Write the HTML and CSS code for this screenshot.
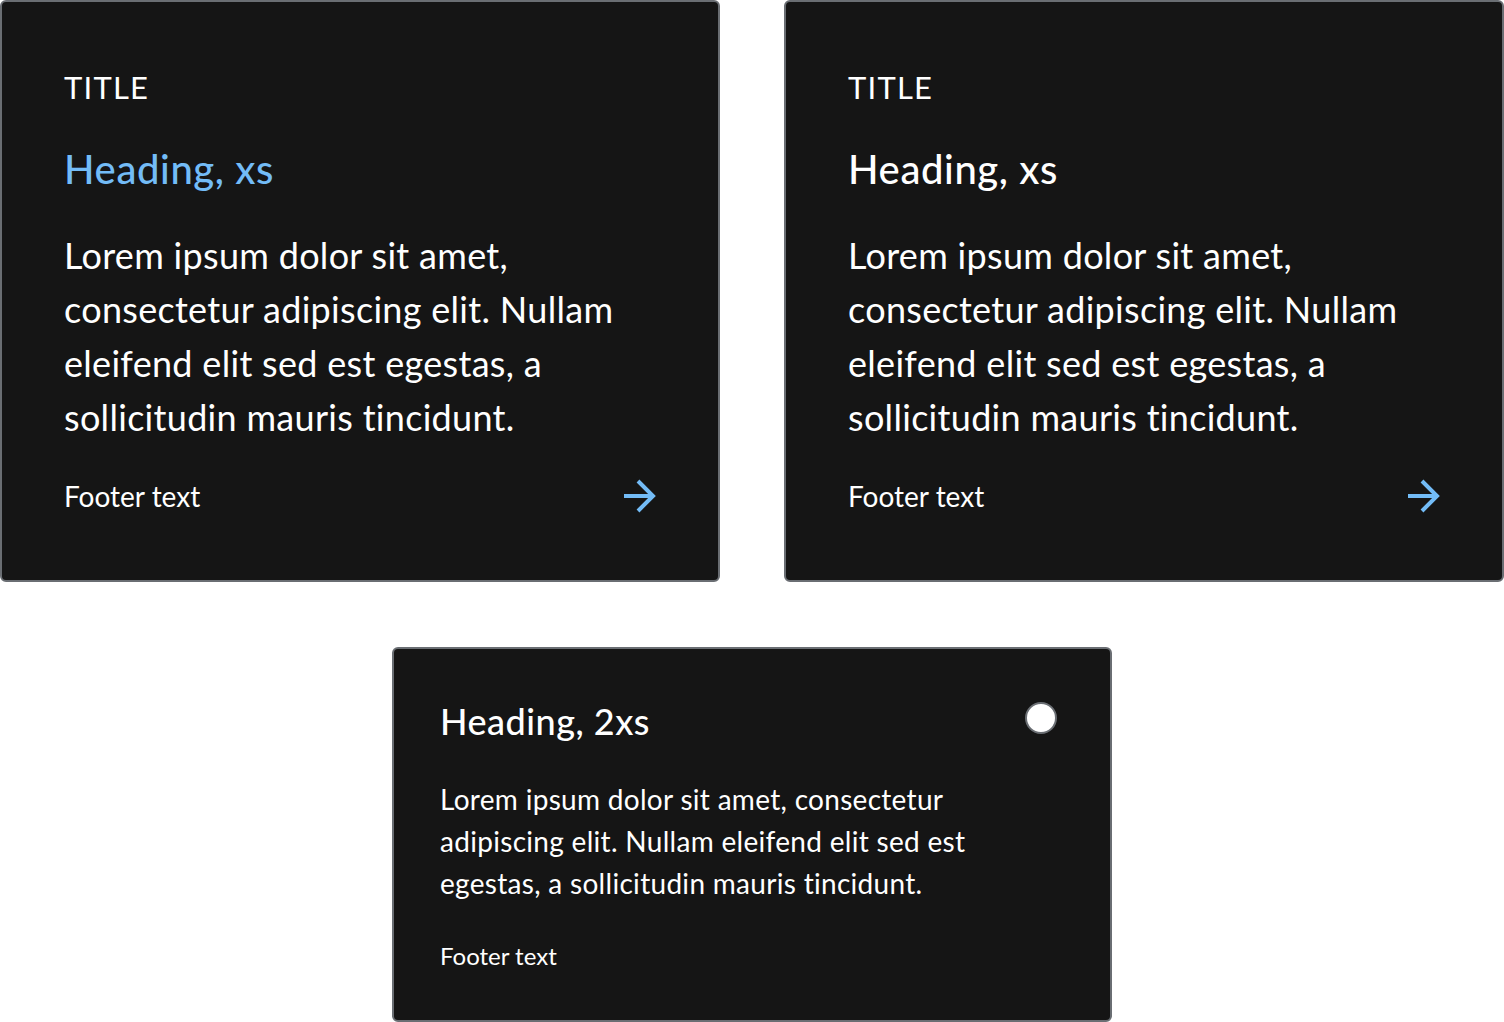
FILE: index.html
```html
<!DOCTYPE html>
<html lang="en">
<head>
<meta charset="utf-8">
<title>Cards</title>
<link rel="stylesheet" href="styles.css">
</head>
<body>
<div class="page">
  <div class="row">
    <div class="card">
      <div class="card-title">TITLE</div>
      <div class="card-heading link">Heading, xs</div>
      <p class="card-body">Lorem ipsum dolor sit amet, consectetur adipiscing elit. Nullam eleifend elit sed est egestas, a sollicitudin mauris tincidunt.</p>
      <div class="card-footer">
        <span>Footer text</span>
        <svg class="arrow" width="34" height="34" viewBox="0 0 34 34"><path d="M2 17 H31 M16 2 L31 17 L16 32" fill="none" stroke="#73bcf7" stroke-width="4" stroke-linecap="butt" stroke-linejoin="miter"/></svg>
      </div>
    </div>
    <div class="card">
      <div class="card-title">TITLE</div>
      <div class="card-heading">Heading, xs</div>
      <p class="card-body">Lorem ipsum dolor sit amet, consectetur adipiscing elit. Nullam eleifend elit sed est egestas, a sollicitudin mauris tincidunt.</p>
      <div class="card-footer">
        <span>Footer text</span>
        <svg class="arrow" width="34" height="34" viewBox="0 0 34 34"><path d="M2 17 H31 M16 2 L31 17 L16 32" fill="none" stroke="#73bcf7" stroke-width="4" stroke-linecap="butt" stroke-linejoin="miter"/></svg>
      </div>
    </div>
  </div>
  <div class="row center">
    <div class="card compact">
      <div class="compact-head">
        <div class="compact-heading">Heading, 2xs</div>
        <span class="radio"></span>
      </div>
      <p class="compact-body">Lorem ipsum dolor sit amet, consectetur adipiscing elit. Nullam eleifend elit sed est egestas, a sollicitudin mauris tincidunt.</p>
      <div class="compact-footer">Footer text</div>
    </div>
  </div>
</div>
</body>
</html>
```
FILE: styles.css
```css
html, body {
  margin: 0;
  padding: 0;
  background: #ffffff;
}
.page {
  display: flex;
  flex-direction: column;
  gap: 65px;
  width: 1504px;
}
.row {
  display: flex;
  gap: 64px;
}
.row.center {
  justify-content: center;
}
.card {
  box-sizing: border-box;
  width: 720px;
  background: #151515;
  border: 2px solid #6a6e73;
  border-radius: 6px;
  padding: 64px 62px 63px;
  color: #ffffff;
  font-family: "Lato", "Liberation Sans", sans-serif;
  display: flex;
  flex-direction: column;
}
.card-title {
  font-size: 31px;
  line-height: 42px;
  letter-spacing: 1.2px;
}
.card-heading {
  margin-top: 35px;
  font-size: 40px;
  line-height: 52px;
  font-weight: 500;
  letter-spacing: 0.6px;
}
.card-heading.link { color: #73bcf7; }
.card-body {
  margin: 33px 0 0;
  font-size: 36px;
  line-height: 54px;
  letter-spacing: 0.3px;
}
.card-footer {
  margin-top: 31px;
  display: flex;
  justify-content: space-between;
  align-items: center;
  font-size: 28px;
  line-height: 42px;
}
.arrow { display: block; margin-right: 0; }
.compact {
  padding: 46px 46px 46px;
}
.compact-head {
  display: flex;
  justify-content: space-between;
  align-items: center;
}
.compact-heading {
  font-size: 36px;
  line-height: 52px;
  font-weight: 500;
  letter-spacing: 0.5px;
}
.radio {
  box-sizing: border-box;
  width: 32px;
  height: 32px;
  border-radius: 50%;
  background: #ffffff;
  border: 2px solid #6a6e73;
  margin-right: 7px;
  margin-top: -6px;
}
.compact-body {
  margin: 31px 0 0;
  font-size: 28px;
  line-height: 42px;
  letter-spacing: 0.3px;
}
.compact-footer {
  margin-top: 34px;
  font-size: 24px;
  line-height: 36px;
}
```
